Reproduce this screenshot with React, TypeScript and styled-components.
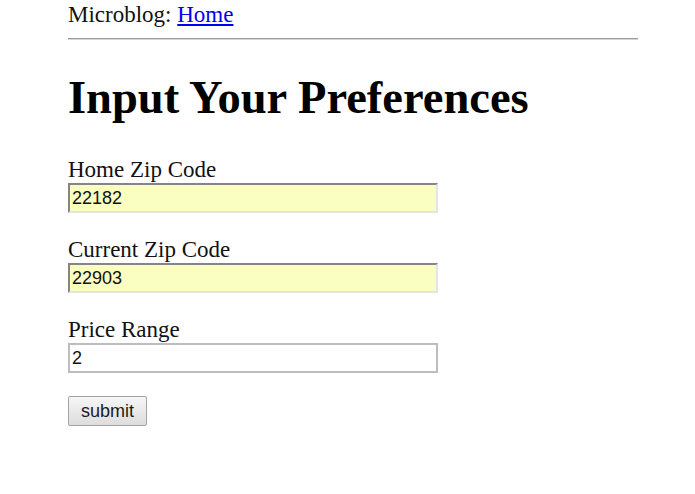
import React from 'react';
import styled, { createGlobalStyle } from 'styled-components';

const GlobalStyle = createGlobalStyle`
  html, body {
    margin: 0;
    padding: 0;
    background: #fff;
  }
  body {
    font-family: "Liberation Serif", "Times New Roman", serif;
    color: #000;
  }
`;

const Page = styled.div`
  width: 570px;
  padding-left: 68px;
`;

const Nav = styled.div`
  font-size: 23px;
  line-height: 26px;
  padding-top: 2px;
  color: #111;
`;

const NavLink = styled.a`
  color: #0000ee;
  text-decoration: underline;
`;

const Rule = styled.hr`
  margin: 10px 0 0;
  height: 0;
  border: none;
  border-top: 1px solid #9a9a9a;
  border-bottom: 1px solid #d6d6d6;
`;

const Heading = styled.h1`
  margin: 32px 0 0;
  font-size: 46.5px;
  line-height: 52px;
  font-weight: bold;
`;

const Form = styled.form`
  margin-top: 33px;
  display: flex;
  flex-direction: column;
  align-items: flex-start;
`;

const Field = styled.div`
  display: flex;
  flex-direction: column;
  margin-bottom: 24px;
`;

const Label = styled.label`
  font-size: 23px;
  line-height: 26px;
  color: #111;
`;

const Input = styled.input<{ $filled?: boolean }>`
  box-sizing: border-box;
  width: 370px;
  height: 30px;
  margin: 0;
  padding: 0 2px;
  font-family: "Liberation Sans", Arial, sans-serif;
  font-size: 18px;
  color: #111;
  outline: none;
  background: ${p => (p.$filled ? '#fafec0' : '#fff')};
  border: 2px solid ${p => (p.$filled ? '#e4e4e4' : '#bdbdbd')};
  ${p => p.$filled && `
    border-top-color: #858585;
    border-left-color: #858585;
  `}
`;

const SubmitButton = styled.button`
  box-sizing: border-box;
  width: 79px;
  height: 30px;
  margin-top: -1px;
  padding: 0;
  font-family: "Liberation Sans", Arial, sans-serif;
  font-size: 18px;
  color: #1a1a1a;
  background: linear-gradient(#f6f6f6, #dddddd);
  border: 1px solid #a3a3a3;
  border-radius: 2px;
`;

const fields = [
  { id: 'home', label: 'Home Zip Code', value: '22182', filled: true },
  { id: 'current', label: 'Current Zip Code', value: '22903', filled: true },
  { id: 'price', label: 'Price Range', value: '2', filled: false },
];

export default function App() {
  return (
    <Page>
      <GlobalStyle />
      <Nav>
        Microblog: <NavLink href="#">Home</NavLink>
      </Nav>
      <Rule />
      <Heading>Input Your Preferences</Heading>
      <Form onSubmit={e => e.preventDefault()}>
        {fields.map(f => (
          <Field key={f.id}>
            <Label htmlFor={f.id}>{f.label}</Label>
            <Input id={f.id} defaultValue={f.value} $filled={f.filled} />
          </Field>
        ))}
        <SubmitButton type="submit">submit</SubmitButton>
      </Form>
    </Page>
  );
}
